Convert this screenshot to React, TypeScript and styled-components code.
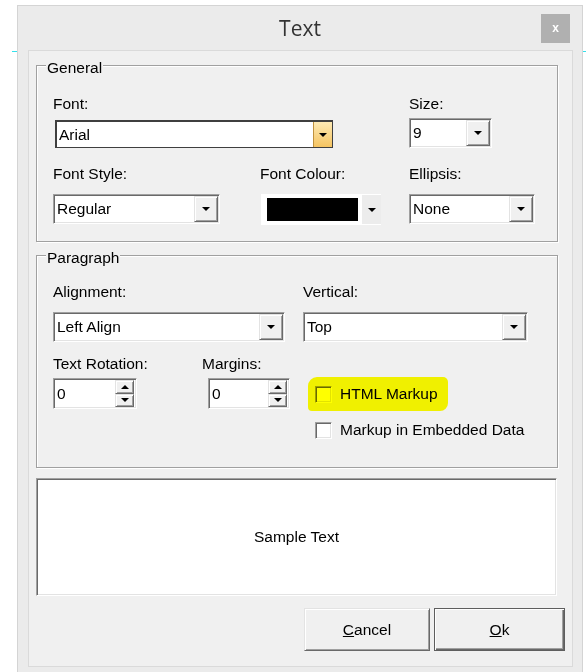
import React from "react";
import styled, { createGlobalStyle, css } from "styled-components";

const GlobalStyle = createGlobalStyle`
  html, body { margin: 0; padding: 0; overflow: hidden; }
  html { background: #fff; }
  body {
    min-height: 672px;
    /* thin cyan guide running behind the dialog */
    background: linear-gradient(to bottom, transparent 51px, #34e0ea 51px, #34e0ea 52px, transparent 52px)
      no-repeat 12px 0 / 574px 100%;
    font-family: "Liberation Sans", Arial, sans-serif;
    font-size: 15.5px;
    color: #000;
  }
`;

/* classic 3D edges */
const sunken = css`
  box-sizing: border-box;
  border: 1px solid;
  border-color: #a0a0a0 #fff #fff #a0a0a0;
  box-shadow: inset 1px 1px 0 #696969, inset -1px -1px 0 #e3e3e3;
`;

const raised = css`
  box-sizing: border-box;
  border: 1px solid;
  border-color: #e3e3e3 #696969 #696969 #e3e3e3;
  box-shadow: inset 1px 1px 0 #fff, inset -1px -1px 0 #a0a0a0;
  background: #f0f0f0;
`;

const Window = styled.div`
  box-sizing: border-box;
  width: 566px;
  height: 690px;
  margin: 5px 0 0 17px;
  background: #ebebeb;
  border: 1px solid #d4d4d4;
  display: flex;
  flex-direction: column;
`;

const TitleBar = styled.header`
  flex: none;
  height: 44px;
  display: grid;
  grid-template-columns: 1fr auto 1fr;
  align-items: center;
`;

const Title = styled.h1`
  grid-column: 2;
  margin: 1px 0 0;
  font: 400 21px/1 "Open Sans", "Noto Sans", sans-serif;
  color: #333;
`;

const CloseButton = styled.button`
  grid-column: 3;
  justify-self: end;
  align-self: start;
  margin: 8px 12px 0 0;
  width: 29px;
  height: 29px;
  border: 0;
  padding: 0;
  background: #b0b0b0;
  color: #fff;
  font: 700 12px/29px "Liberation Sans", Arial, sans-serif;
`;

const Client = styled.main`
  box-sizing: border-box;
  flex: none;
  height: 617px;
  margin: 0 9px 0 10px;
  border: 1px solid #dadada;
  background: #f0f0f0;
  padding: 14px 0 0 7px;
  display: flex;
  flex-direction: column;
`;

const Group = styled.section<{ $height: number }>`
  box-sizing: border-box;
  flex: none;
  width: 522px;
  height: ${(p) => p.$height}px;
  border: 1px solid #a0a0a0;
  box-shadow: inset 1px 1px 0 #fff, 1px 1px 0 #fff;
  padding: 0 0 0 16px;

  & + & {
    margin-top: 13px;
  }
`;

const Legend = styled.h2`
  width: fit-content;
  margin: -7px 0 0 -7px;
  padding: 0 1px;
  background: #f0f0f0;
  font: inherit;
  line-height: 18px;
`;

const Row = styled.div<{ $top: number }>`
  display: flex;
  align-items: flex-start;
  margin-top: ${(p) => p.$top}px;
`;

const Field = styled.div<{ $width: number; $offset?: number; $gap: number }>`
  display: flex;
  flex-direction: column;
  width: ${(p) => p.$width}px;
  margin-left: ${(p) => p.$offset ?? 0}px;
  gap: ${(p) => p.$gap}px;
`;

const Label = styled.span`
  line-height: 18px;
  white-space: nowrap;
`;

const Combo = styled.div`
  ${sunken};
  height: 30px;
  padding: 1px;
  background: #fff;
  display: flex;
  align-items: stretch;
`;

const Value = styled.span`
  flex: 1;
  display: flex;
  align-items: center;
  padding-left: 2px;
  line-height: 18px;
`;

const DropButton = styled.span`
  ${raised};
  flex: none;
  width: 24px;
  display: grid;
  place-items: center;
`;

/* font list: has focus and the pointer over its button */
const HotCombo = styled.div`
  box-sizing: border-box;
  height: 28px;
  margin: 2px 0 0 2px;
  border: 2px solid #3f3f3f;
  border-right-width: 1px;
  border-bottom-width: 1px;
  background: #fff;
  display: flex;
  align-items: stretch;
`;

const HotDropButton = styled.span`
  flex: none;
  width: 18px;
  border-left: 1px solid #c0913d;
  background: linear-gradient(#fde9b4, #f5c461);
  display: grid;
  place-items: center;
`;

const ColourBox = styled.div`
  box-sizing: border-box;
  height: 31px;
  margin-left: 1px;
  padding: 4px 0 4px 6px;
  background: #fff;
  display: flex;
`;

const Swatch = styled.span<{ $color: string }>`
  width: 91px;
  background: ${(p) => p.$color};
`;

const ColourDrop = styled.span`
  width: 19px;
  margin: -3px 0 -3px 4px;
  background: #ececec;
  display: grid;
  place-items: center;
`;

const Spin = styled.div<{ $width: number; $offset?: number }>`
  ${sunken};
  width: ${(p) => p.$width}px;
  height: 31px;
  margin-left: ${(p) => p.$offset ?? 0}px;
  padding: 1px 2px 1px 1px;
  background: #fff;
  display: flex;
  align-items: stretch;
`;

const SpinButtons = styled.span`
  flex: none;
  width: 19px;
  display: flex;
  flex-direction: column;
`;

const SpinButton = styled.span`
  ${raised};
  flex: 1;
  display: grid;
  place-items: center;
`;

const CheckList = styled.div<{ $offset: number }>`
  display: flex;
  flex-direction: column;
  gap: 9px;
  margin-left: ${(p) => p.$offset}px;
  padding-top: 22px;
`;

const CheckRow = styled.label<{ $height: number; $marked?: boolean }>`
  position: relative;
  width: fit-content;
  height: ${(p) => p.$height}px;
  padding: 0 10px 0 7px;
  display: flex;
  align-items: center;
  gap: 8px;
  line-height: 18px;
  white-space: nowrap;

  ${(p) =>
    p.$marked &&
    css`
      &::after {
        content: "";
        position: absolute;
        inset: 0;
        background: #ffff00;
        border-radius: 9px 5px 8px 4px;
        mix-blend-mode: multiply;
        pointer-events: none;
      }
    `}
`;

const CheckBox = styled.span`
  ${sunken};
  flex: none;
  width: 17px;
  height: 17px;
  background: #fff;
`;

const Preview = styled.div`
  ${sunken};
  flex: none;
  width: 521px;
  height: 118px;
  margin-top: 10px;
  background: #fff;
  display: grid;
  place-items: center;
`;

const ButtonRow = styled.div`
  display: flex;
  justify-content: flex-end;
  gap: 4px;
  margin-top: 12px;
  padding-right: 7px;
`;

const PushButton = styled.button<{ $default?: boolean }>`
  ${raised};
  width: ${(p) => (p.$default ? 131 : 126)}px;
  height: 43px;
  padding: 0;
  font: inherit;
  color: #000;

  ${(p) =>
    p.$default &&
    css`
      border: 1px solid #5e5e5e;
      box-shadow: inset 1px 1px 0 #fff, inset -1px -1px 0 #696969, inset -2px -2px 0 #a0a0a0;
    `}
`;

const Arrow = ({ up }: { up?: boolean }) => (
  <svg width="8" height="4" viewBox="0 0 8 4" aria-hidden>
    <path d={up ? "M0 4h8L4 0z" : "M0 0h8L4 4z"} fill="#000" />
  </svg>
);

const Select = ({ value }: { value: string }) => (
  <Combo>
    <Value>{value}</Value>
    <DropButton>
      <Arrow />
    </DropButton>
  </Combo>
);

const Spinner = ({ value, width, offset }: { value: string; width: number; offset?: number }) => (
  <Spin $width={width} $offset={offset}>
    <Value>{value}</Value>
    <SpinButtons>
      <SpinButton>
        <Arrow up />
      </SpinButton>
      <SpinButton>
        <Arrow />
      </SpinButton>
    </SpinButtons>
  </Spin>
);

export default function App() {
  return (
    <>
      <GlobalStyle />
      <Window>
        <TitleBar>
          <Title>Text</Title>
          <CloseButton>x</CloseButton>
        </TitleBar>
        <Client>
          <Group $height={177}>
            <Legend>General</Legend>
            <Row $top={18}>
              <Field $width={280} $gap={5}>
                <Label>Font:</Label>
                <HotCombo>
                  <Value>Arial</Value>
                  <HotDropButton>
                    <Arrow />
                  </HotDropButton>
                </HotCombo>
              </Field>
              <Field $width={83} $offset={76} $gap={5}>
                <Label>Size:</Label>
                <Select value="9" />
              </Field>
            </Row>
            <Row $top={17}>
              <Field $width={167} $gap={11}>
                <Label>Font Style:</Label>
                <Select value="Regular" />
              </Field>
              <Field $width={121} $offset={40} $gap={11}>
                <Label>Font Colour:</Label>
                <ColourBox>
                  <Swatch $color="#000" />
                  <ColourDrop>
                    <Arrow />
                  </ColourDrop>
                </ColourBox>
              </Field>
              <Field $width={126} $offset={28} $gap={11}>
                <Label>Ellipsis:</Label>
                <Select value="None" />
              </Field>
            </Row>
          </Group>

          <Group $height={213}>
            <Legend>Paragraph</Legend>
            <Row $top={16}>
              <Field $width={232} $gap={11}>
                <Label>Alignment:</Label>
                <Select value="Left Align" />
              </Field>
              <Field $width={225} $offset={18} $gap={11}>
                <Label>Vertical:</Label>
                <Select value="Top" />
              </Field>
            </Row>
            <Row $top={13}>
              <Field $width={149} $gap={5}>
                <Label>Text Rotation:</Label>
                <Spinner value="0" width={84} />
              </Field>
              <Field $width={88} $gap={5}>
                <Label>Margins:</Label>
                <Spinner value="0" width={82} offset={6} />
              </Field>
              <CheckList $offset={18}>
                <CheckRow $height={34} $marked>
                  <CheckBox />
                  HTML Markup
                </CheckRow>
                <CheckRow $height={20}>
                  <CheckBox />
                  Markup in Embedded Data
                </CheckRow>
              </CheckList>
            </Row>
          </Group>

          <Preview>Sample Text</Preview>

          <ButtonRow>
            <PushButton>
              <u>C</u>ancel
            </PushButton>
            <PushButton $default>
              <u>O</u>k
            </PushButton>
          </ButtonRow>
        </Client>
      </Window>
    </>
  );
}
